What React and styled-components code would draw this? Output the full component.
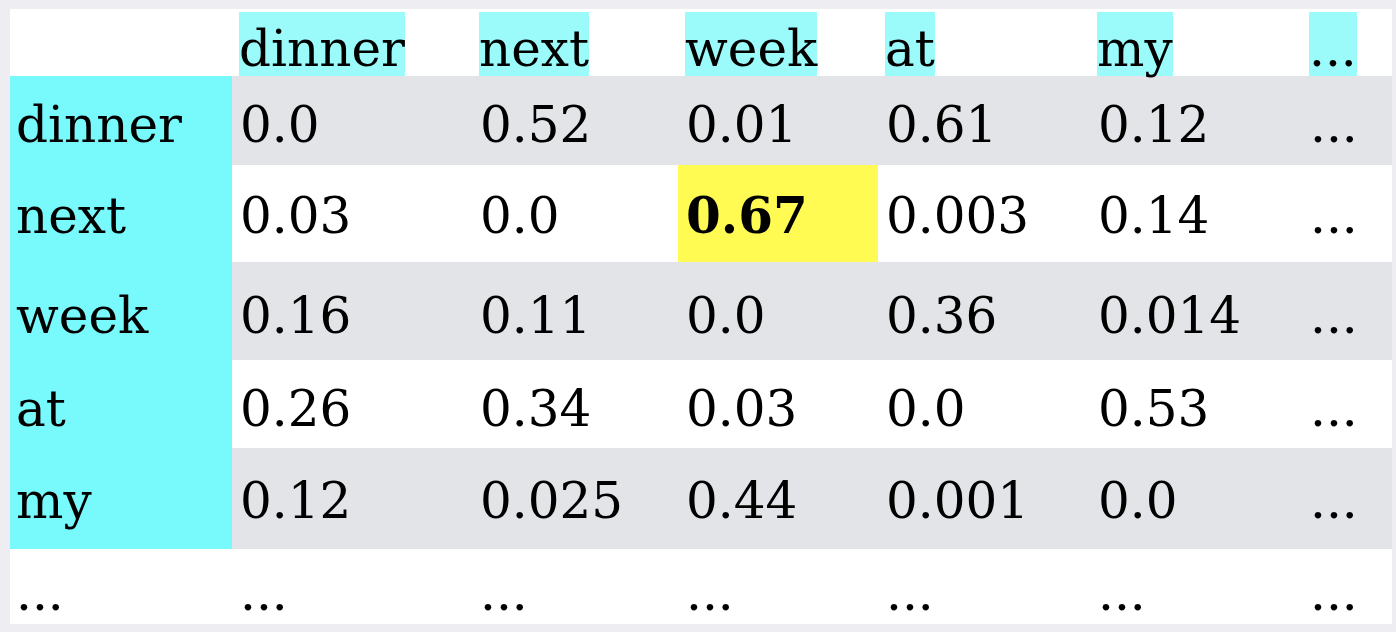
import React from "react";
import styled, { createGlobalStyle } from "styled-components";

const words = ["dinner", "next", "week", "at", "my"];

const rows = [
  { label: "dinner", height: 89, base: 66, shade: true, values: ["0.0", "0.52", "0.01", "0.61", "0.12", "..."] },
  { label: "next", height: 97, base: 68, values: ["0.03", "0.0", "0.67", "0.003", "0.14", "..."], hot: 2 },
  { label: "week", height: 98, base: 71, shade: true, values: ["0.16", "0.11", "0.0", "0.36", "0.014", "..."] },
  { label: "at", height: 88, base: 66, values: ["0.26", "0.34", "0.03", "0.0", "0.53", "..."] },
  { label: "my", height: 101, base: 70, shade: true, values: ["0.12", "0.025", "0.44", "0.001", "0.0", "..."] },
];

const App = () => {
  return (
    <>
      <GlobalStyle />
      <Sheet>
        <Row $height={67}>
          <HeadCell />
          {[...words, "..."].map((w) => (
            <HeadCell key={w}>
              <HeadWord>{w}</HeadWord>
            </HeadCell>
          ))}
        </Row>
        {rows.map((r) => (
          <Row key={r.label} $height={r.height} $shade={r.shade}>
            <Label $base={r.base}>{r.label}</Label>
            {r.values.map((v, i) => (
              <Cell key={i} $base={r.base} $hot={r.hot === i}>
                {v}
              </Cell>
            ))}
          </Row>
        ))}
        <Row $height={75}>
          {Array.from({ length: 7 }).map((_, i) => (
            <Cell key={i} $base={61} $first={i === 0}>
              ...
            </Cell>
          ))}
        </Row>
      </Sheet>
    </>
  );
};

const GlobalStyle = createGlobalStyle`
  body {
    margin: 0;
    background: #ededf2;
    font-family: "DejaVu Serif", "Liberation Serif", serif;
  }
  #root {
    padding: 9px 4px 8px 10px;
  }
`;

const Sheet = styled.div`
  background: #ffffff;
  color: #000;
  font-size: 50px;
  line-height: 1;
`;

const Row = styled.div`
  display: grid;
  grid-template-columns: 222px 240px 206px 200px 212px 212px 1fr;
  height: ${(p) => p.$height}px;
  background: ${(p) => (p.$shade ? "#e3e4e8" : "transparent")};
`;

const Cell = styled.div`
  padding-left: ${(p) => (p.$first ? 6 : 8)}px;
  padding-top: ${(p) => p.$base - 42}px;
  background: ${(p) => (p.$hot ? "#fffb52" : "transparent")};
  font-weight: ${(p) => (p.$hot ? 700 : 400)};
  white-space: nowrap;
`;

const Label = styled(Cell)`
  padding-left: 6px;
  background: #78f9fb;
`;

const HeadCell = styled.div`
  padding: 3px 0 0 7px;
`;

const HeadWord = styled.span`
  display: block;
  box-sizing: border-box;
  width: fit-content;
  height: 64px;
  padding-top: 12px;
  background: #9bfbfb;
  white-space: nowrap;
`;

export default App;
